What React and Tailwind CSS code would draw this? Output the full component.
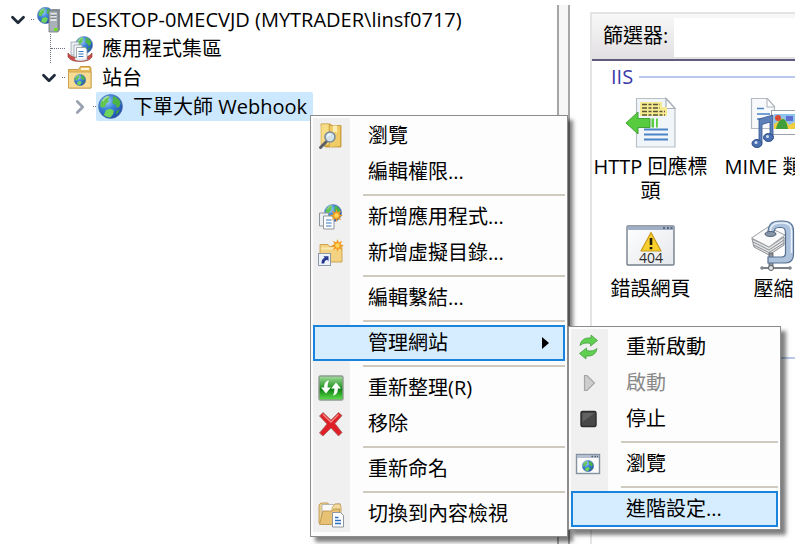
import { useState } from 'react';
import { ChevronDown, ChevronRight } from 'lucide-react';

/* ---------- ICONS ---------- */

// Shared globe, drawn in a 24x24 box so other icons can nest it
function Globe({ size = 26, ...rest }) {
  return (
    <svg width={size} height={size} viewBox="0 0 24 24" {...rest}>
      <defs>
        <radialGradient id="globeSea" cx="35%" cy="28%" r="80%">
          <stop offset="0" stopColor="#a8d2fa" />
          <stop offset="0.4" stopColor="#3f86dc" />
          <stop offset="1" stopColor="#1c47a4" />
        </radialGradient>
      </defs>
      <circle cx="12" cy="12" r="11.5" fill="url(#globeSea)" stroke="#4c6ea8" strokeWidth="0.6" />
      <path d="M2.2 9.5C3.4 5.4 6.3 2.6 10 1.8l1.2 1.6-1.6 2.2.8 2-2.6 1.6-.6 2.6-2.4 1.4-2.4-.8z" fill="#62c650" />
      <path d="M14.5 2c3.4 1 6 3.4 7.2 6.4l-1.2 3.8-2.4 1-1.2-2.8-3.2-1.6.6-3.4z" fill="#4db545" />
      <path d="M7.6 15.4l4.2-1.2 3.4 1.6-.6 3.4-2.6 3.4c-2.6 0-4.8-1-6.4-2.4z" fill="#6fd45c" />
      <path d="M17.8 16.2l3-1.4c-.6 2-1.8 3.8-3.4 5z" fill="#3aa341" />
      <path d="M4.6 6.8C6 4.4 8 3 10.4 2.6" stroke="#d6f0c8" strokeWidth="1.2" fill="none" opacity="0.7" />
    </svg>
  );
}

function ServerIcon() {
  return (
    <svg width="26" height="28" viewBox="0 0 26 28">
      <Globe size={17} x="1" y="1" />
      <path d="M13 5l3-2h8v21l-2 2h-9z" fill="#8b949c" />
      <path d="M13 5h9v21h-9z" fill="#aab2b8" stroke="#6d757c" strokeWidth="0.8" />
      <path d="M14.5 8h6M14.5 11h6M14.5 14h6" stroke="#f4f6f7" strokeWidth="1.4" />
      <path d="M14.5 9.2h6M14.5 12.2h6" stroke="#5d646a" strokeWidth="0.8" />
      <rect x="18" y="22" width="3.4" height="3" fill="#6be01e" />
    </svg>
  );
}

function AppPoolIcon() {
  return (
    <svg width="26" height="26" viewBox="0 0 26 26">
      <Globe size={18} x="8" y="0" />
      <path d="M1 17v4c2 3 6 4.5 12 4.5s10-1.5 12-4.5v-4c-2 3-6 4.5-12 4.5S3 20 1 17z" fill="#c8504a" stroke="#8f2f2c" strokeWidth="0.6" />
      <path d="M4 6h8v13H4z" fill="#eceff2" stroke="#9ba3ab" strokeWidth="0.8" />
      <path d="M7 9h8v12H7z" fill="#f5f7f9" stroke="#9ba3ab" strokeWidth="0.8" />
      <path d="M9.5 11.5h8.5l2 2V24h-10.5z" fill="#fff" stroke="#8b949c" strokeWidth="0.8" />
      <path d="M11.5 15.5h5M11.5 18h5M11.5 20.5h5" stroke="#3b78c4" strokeWidth="1.1" />
      <path d="M8 22.5c3 1.5 8 1.5 11 0" stroke="#e9ecef" strokeWidth="2" fill="none" />
    </svg>
  );
}

function SitesIcon() {
  return (
    <svg width="26" height="26" viewBox="0 0 26 26">
      <path d="M1.5 4.5h10l2-3h9.5l1 2v19.5h-22.5z" fill="#e9bf62" stroke="#c08f3a" strokeWidth="0.9" />
      <path d="M14 3h8v2h-8z" fill="#fff8e0" />
      <path d="M1.5 7h22.5v16h-22.5z" fill="#f6dc92" stroke="#cda04c" strokeWidth="0.9" />
      <Globe size={12} x="7" y="9" />
    </svg>
  );
}

function BrowseFolderIcon() {
  return (
    <svg width="28" height="28" viewBox="0 0 28 28">
      <path d="M4 2h9l2 1.5h9V25H8z" fill="#d9ab3f" stroke="#c2953a" strokeWidth="0.8" />
      <path d="M4 2h8v21H4z" fill="#f6dd86" stroke="#d0a549" strokeWidth="0.6" />
      <path d="M13 4h10v20l-10 1z" fill="#f0cc66" />
      <path d="M16 3.5h4V11l-2-1.5L16 11z" fill="#fbeeb4" />
      <path d="M9.5 19.5L3.5 25.5" stroke="#5b5f66" strokeWidth="3" strokeLinecap="round" />
      <circle cx="13" cy="15" r="5" fill="#cfe6f8" fillOpacity="0.9" stroke="#7b8c9c" strokeWidth="1.6" />
      <path d="M10.5 14.5c.3-1.5 1.5-2.3 3-2.2" stroke="#fff" strokeWidth="1.2" fill="none" />
    </svg>
  );
}

function Spark({ x, y }) {
  return (
    <svg x={x} y={y} width="13" height="13" viewBox="0 0 13 13">
      <path d="M6.5 0l1.3 3.6L11.3 1.7 9.4 5.2 13 6.5 9.4 7.8l1.9 3.5-3.5-1.9L6.5 13 5.2 9.4 1.7 11.3l1.9-3.5L0 6.5l3.6-1.3L1.7 1.7l3.5 1.9z" fill="#f29a1f" />
      <circle cx="6.5" cy="6.5" r="2.2" fill="#ffd75a" />
    </svg>
  );
}

function AddAppIcon() {
  return (
    <svg width="28" height="28" viewBox="0 0 28 28">
      <Globe size={18} x="7" y="1" />
      <path d="M2.5 10h9v13h-9z" fill="#eef1f4" stroke="#8f979f" strokeWidth="1" />
      <path d="M6.5 13h8l2.5 2.5V26H6.5z" fill="#fff" stroke="#8f979f" strokeWidth="1" />
      <path d="M9 17h5.5M9 20h5.5M9 23h5.5" stroke="#3b78c4" strokeWidth="1.1" />
      <Spark x="13" y="6" />
    </svg>
  );
}

function AddVirtualDirIcon() {
  return (
    <svg width="28" height="28" viewBox="0 0 28 28">
      <path d="M3 5.5h8l1.5 2H25V23H3z" fill="#f3d382" stroke="#c99d48" strokeWidth="0.9" />
      <path d="M4 8.5h20v2H4z" fill="#fbe9b4" />
      <Spark x="14" y="0" />
      <rect x="1.5" y="14.5" width="12" height="12" fill="#eef3fa" stroke="#8d99aa" />
      <path d="M4.5 24.5c0-3.5 1-5 3.2-5.5l-1.2-1.7h5v5l-1.4-1.5c-1.8.4-2.6 1.5-2.8 3.7z" fill="#25388f" />
    </svg>
  );
}

function RefreshIcon() {
  return (
    <svg width="28" height="28" viewBox="0 0 28 28">
      <defs>
        <linearGradient id="refreshBg" x1="0" y1="0" x2="0" y2="1">
          <stop offset="0" stopColor="#a5dd9f" />
          <stop offset="0.45" stopColor="#2d9a2b" />
          <stop offset="0.55" stopColor="#0f7f13" />
          <stop offset="1" stopColor="#5fe04c" />
        </linearGradient>
      </defs>
      <rect x="2" y="2" width="24" height="24" rx="1.5" fill="url(#refreshBg)" stroke="#8f9a8f" strokeWidth="1.4" />
      <path d="M12 6.5C8.5 7 7 9.5 7.2 13.5H4l5 6 4.8-6h-3.2c0-2.5.2-4.5 1.4-7z" fill="#fff" />
      <path d="M16 21.5c3.5-.5 5-3 4.8-7H24l-5-6-4.8 6h3.2c0 2.5-.2 4.5-1.4 7z" fill="#fff" />
    </svg>
  );
}

function RemoveIcon() {
  return (
    <svg width="28" height="28" viewBox="0 0 28 28">
      <path d="M6 2.5l8 7.5 7.5-7.5 3.5 3-7 8 7 9-3.5 3.5-7.5-8-8 8L2.5 23l7.5-9-7.5-8z" fill="#df2027" stroke="#a9696a" strokeWidth="0.9" strokeLinejoin="round" />
      <path d="M6 4.5l8 7.5 7.5-7.5" stroke="#f58a86" strokeWidth="1.3" fill="none" />
    </svg>
  );
}

function ContentViewIcon() {
  return (
    <svg width="28" height="28" viewBox="0 0 28 28">
      <path d="M2 5l2-2h7l1 2v18H2z" fill="#edd190" stroke="#b98f45" strokeWidth="0.8" />
      <path d="M5 4.5h12l6-1v17H5z" fill="#fafafa" stroke="#a9a9a9" strokeWidth="0.8" />
      <path d="M15 8l3-4h5l1 3v13l-9 3z" fill="#f3dca0" stroke="#c29a51" strokeWidth="0.8" />
      <path d="M2.5 24.5L6 11h9l2-2h6l-3 15.5z" fill="#e8c274" stroke="#b98f45" strokeWidth="0.8" />
      <path d="M15.5 12.5h8l3 3V27h-11z" fill="#fff" stroke="#8f979f" strokeWidth="1" />
      <path d="M18 17.5h3.5M18 20.5h6M18 23.5h6" stroke="#2f6fc0" strokeWidth="1.3" />
    </svg>
  );
}

function RestartIcon() {
  return (
    <svg width="28" height="28" viewBox="0 0 28 28">
      <path d="M5 12.5C6 6.5 10 4.5 16 5V2l6.5 5.5-7 5.5v-2.5c-4.5-1-7.5-.5-10.5 2z" fill="#5fd04f" stroke="#4a9c44" strokeWidth="0.8" />
      <path d="M22 15.5c-1 6-5 8-11 7.5v3l-6.5-5.500 7-5.500v2.5c4.5 1 7.5.5 10.5-2z" fill="#5fd04f" stroke="#4a9c44" strokeWidth="0.8" />
    </svg>
  );
}

function StartIcon() {
  return (
    <svg width="28" height="28" viewBox="0 0 28 28">
      <path d="M9.5 6.5H12l7.5 7.5-7.5 7.5H9.5z" fill="#cdcdcd" stroke="#a6a6a6" strokeWidth="1.2" />
    </svg>
  );
}

function StopIcon() {
  return (
    <svg width="28" height="28" viewBox="0 0 28 28">
      <rect x="6" y="6.5" width="15" height="15" rx="1.5" fill="#484848" stroke="#2c2c2c" strokeWidth="1.4" />
      <path d="M7.5 8h12l-12 9z" fill="#626262" />
    </svg>
  );
}

function BrowseSiteIcon() {
  return (
    <svg width="28" height="28" viewBox="0 0 28 28">
      <rect x="1.5" y="4.5" width="23" height="19" fill="#fafafa" stroke="#8391a2" strokeWidth="1.4" />
      <path d="M2 5h22v3H2z" fill="#b4c0cf" />
      <path d="M16.5 6.5H18M19.5 6.5H21M22 6.5h1" stroke="#4f5d70" strokeWidth="1.4" />
      <Globe size={12} x="7" y="10" />
    </svg>
  );
}

function HttpHeadersIcon() {
  return (
    <svg width="52" height="52" viewBox="0 0 52 52">
      <path d="M11.5 1.5h30l8.5 10V50H11.500z" fill="#f0f5fa" stroke="#b9bfc6" strokeWidth="1.2" />
      <path d="M41 1.5v10h9z" fill="#fff" stroke="#a9afb6" strokeWidth="1.2" />
      <path d="M15 5h22v5h5v9H15z" fill="#f7eb92" />
      <path d="M17 7.5h18M17 11h18M17 14.5h23M17 18h23" stroke="#5a5436" strokeWidth="1.5" strokeDasharray="5 1.5 3 1.5" />
      <path d="M1 26l12-11v6.5h12v9H13V37z" fill="#57cc3f" stroke="#3a9a2c" strokeWidth="0.9" />
      <path d="M26.5 21.5H29v9h-2.500zM31 21.5h1.800v9H31z" fill="#57cc3f" />
      <path d="M19 32.5h24M19 37.5h24M19 42.5h24" stroke="#4b83c6" strokeWidth="1.8" />
    </svg>
  );
}

function MimeTypesIcon() {
  return (
    <svg width="52" height="52" viewBox="0 0 52 52">
      <path d="M3.5 1.5h16l7 8v22h-23z" fill="#f7f9fb" stroke="#b4bac1" strokeWidth="1.2" />
      <path d="M19 1.5V10h7.5z" fill="#fff" stroke="#a9afb6" />
      <path d="M9 11.5h7M9 17h13M9 22h8" stroke="#4b83c6" strokeWidth="1.5" />
      <rect x="23.5" y="13.5" width="27" height="24" fill="#fff" stroke="#9aa2ab" />
      <rect x="26" y="17" width="21" height="15" fill="#8ec3f0" />
      <path d="M26 32v-5l9-6 6 7 6-3v7z" fill="#f1ce3d" />
      <path d="M28 32c1-6 4-10 7-10s4 5 5 10z" fill="#3f9e3a" />
      <circle cx="30" cy="21" r="3" fill="#dd4a32" />
      <path d="M38 19h7v5h-7z" fill="#5f6fd0" />
      <path d="M11 22l14-4v22h-3V25l-8 2.5V46h-3z" fill="#5d80ba" stroke="#34558f" strokeWidth="0.8" />
      <ellipse cx="9" cy="46.5" rx="5" ry="4" fill="#4a6fae" stroke="#2f4c83" />
      <ellipse cx="20.5" cy="40.5" rx="5" ry="4" fill="#4a6fae" stroke="#2f4c83" />
      <circle cx="8" cy="45.5" r="1.5" fill="#d3e0f5" />
      <circle cx="19.5" cy="39.5" r="1.5" fill="#d3e0f5" />
    </svg>
  );
}

function ErrorPagesIcon() {
  return (
    <svg width="52" height="52" viewBox="0 0 52 52">
      <defs>
        <linearGradient id="errBg" x1="0" y1="0" x2="1" y2="1">
          <stop offset="0" stopColor="#ffffff" />
          <stop offset="1" stopColor="#e4e7eb" />
        </linearGradient>
      </defs>
      <rect x="2" y="7" width="47" height="39" rx="1" fill="url(#errBg)" stroke="#75808d" strokeWidth="1.4" />
      <path d="M2.5 7.5h46V11h-46z" fill="#9fb0c6" />
      <path d="M38 9h2M42 9h2M45.5 9h2" stroke="#46566c" strokeWidth="1.5" />
      <path d="M26 13.5L36 32H16z" fill="#f8cf2c" stroke="#c79a1d" strokeWidth="1.2" strokeLinejoin="round" />
      <path d="M26 19v7M26 28v2.200" stroke="#1d1a0c" strokeWidth="2.6" />
      <text x="26" y="44" textAnchor="middle" fontFamily="Open Sans, sans-serif" fontSize="14" fill="#2c2c2c">404</text>
    </svg>
  );
}

function CompressionIcon() {
  return (
    <svg width="52" height="52" viewBox="0 0 52 52">
      <path d="M4 20l17 8 15-10v8L21 36 6 28z" fill="#e4e5e6" stroke="#8c8f93" />
      <path d="M5 23l16 8 15-10M5.5 26L21 33.500 36 24" stroke="#8c8f93" fill="none" />
      <path d="M3.5 19L20 8l17 8-16 12z" fill="#fafafa" stroke="#9b9ea2" />
      <path d="M21 34h4v15h-4z" fill="#8f969e" stroke="#53595f" strokeWidth="0.8" />
      <path
        d="M20 14C20 5 24 2 32 2h3c7 0 10.500 4 10.500 10v23c0 6-3 9-8 9H20v-6h14c2.500 0 3.500-1 3.500-4V14c0-4-1-5.500-4-5.500h-3c-3 0-4.500 1.500-4.500 5.500z"
        fill="#adc2dc"
        stroke="#56708f"
        strokeWidth="1.2"
      />
      <path d="M22.500 12c0-5.500 3.500-8 9.500-8h3c5.500 0 8.500 3 8.500 8v22" stroke="#e9f1fa" strokeWidth="1.5" fill="none" />
      <ellipse cx="22.5" cy="15" rx="5.5" ry="2.5" fill="#8795a8" stroke="#4b5a6e" />
      <path d="M14 49h28" stroke="#53595f" strokeWidth="1.5" />
      <circle cx="14" cy="49" r="1.8" fill="#80868d" />
      <circle cx="42" cy="49" r="1.8" fill="#80868d" />
      <circle cx="23" cy="49" r="2.5" fill="#e3e6e9" stroke="#53595f" />
    </svg>
  );
}

/* ---------- TREE ---------- */

function Dots() {
  return <span className="w-[3px] shrink-0 border-t border-dotted border-gray-500" />;
}

function TreeRow({ indent, toggle, icon, label, selected, onSelect }) {
  return (
    <li role="treeitem" aria-selected={!!selected} className={`flex items-center h-[29px] ${indent}`}>
      {toggle}
      <button
        onClick={onSelect}
        className={`flex items-center h-full pr-[6px] whitespace-nowrap rounded-xs ${selected ? 'bg-[#cce8ff]' : ''}`}
      >
        <span className="flex justify-center w-[29px] shrink-0">{icon}</span>
        <span className="pl-2">{label}</span>
      </button>
    </li>
  );
}

function Toggle({ open }) {
  return (
    <>
      <button className="w-[15px] mr-[6px] flex justify-center shrink-0" aria-expanded={open}>
        {open ? (
          <ChevronDown size={22} strokeWidth={3} className="shrink-0 text-gray-800" />
        ) : (
          <ChevronRight size={22} strokeWidth={3} className="shrink-0 text-gray-400" />
        )}
      </button>
      <Dots />
    </>
  );
}

function ConnectionsTree() {
  const [selected, setSelected] = useState('site');

  return (
    <ul role="tree" className="pt-[5px]">
      <TreeRow
        indent="pl-[10px]"
        toggle={<Toggle open />}
        icon={<ServerIcon />}
        label="DESKTOP-0MECVJD (MYTRADER\linsf0717)"
        selected={selected === 'server'}
        onSelect={() => setSelected('server')}
      />
      <TreeRow
        indent="pl-[50px]"
        toggle={
          <span className="flex items-center self-stretch w-[15px] border-l border-dotted border-gray-500">
            <span className="w-full border-t border-dotted border-gray-500" />
          </span>
        }
        icon={<AppPoolIcon />}
        label="應用程式集區"
        selected={selected === 'pools'}
        onSelect={() => setSelected('pools')}
      />
      <TreeRow
        indent="pl-[41px]"
        toggle={<Toggle open />}
        icon={<SitesIcon />}
        label="站台"
        selected={selected === 'sites'}
        onSelect={() => setSelected('sites')}
      />
      <TreeRow
        indent="pl-[72px]"
        toggle={<Toggle open={false} />}
        icon={<Globe size={25} />}
        label="下單大師 Webhook"
        selected={selected === 'site'}
        onSelect={() => setSelected('site')}
      />
    </ul>
  );
}

/* ---------- MENUS ---------- */

function Menu({ items, className }) {
  return (
    <ul
      role="menu"
      className={`absolute z-10 border border-[#8c8c8c] px-[2px] pt-[2px] bg-[#fdfdfd] bg-[linear-gradient(#f0f0f0,#f0f0f0)] bg-[length:37px_100%] bg-origin-content bg-no-repeat shadow-[5px_5px_4px_rgba(0,0,0,0.5)] ${className}`}
    >
      {items.map((item, i) =>
        item === '-' ? (
          <li key={i} role="separator" className="flex items-center h-[9px] pl-[50px]">
            <span className="w-full h-[2px] bg-[#cfcbc0]" />
          </li>
        ) : (
          <li key={i} role="none" className="relative">
            <button
              role="menuitem"
              disabled={item.disabled}
              className={`flex items-center w-full h-9 text-left whitespace-nowrap border-2 ${
                item.active ? 'bg-[#d5edff] border-[#1a84dc]' : 'border-transparent enabled:hover:bg-[#d5edff]'
              } ${item.disabled ? 'text-[#8a8a8a]' : ''}`}
            >
              <span className="flex justify-center w-[31px] shrink-0">{item.icon}</span>
              <span className="flex-1 pl-[22px]">{item.label}</span>
              {item.children && (
                <svg width="8" height="14" viewBox="0 0 8 14" className="mr-[14px]">
                  <path d="M1 1l7 6-7 6z" fill="#000" />
                </svg>
              )}
            </button>
            {item.children && <Menu items={item.children} className="left-full top-px ml-[3px] w-[213px] pb-[2px]" />}
          </li>
        )
      )}
    </ul>
  );
}

const manageItems = [
  { label: '重新啟動', icon: <RestartIcon /> },
  { label: '啟動', icon: <StartIcon />, disabled: true },
  { label: '停止', icon: <StopIcon /> },
  '-',
  { label: '瀏覽', icon: <BrowseSiteIcon /> },
  '-',
  { label: '進階設定...', active: true },
];

const siteItems = [
  { label: '瀏覽', icon: <BrowseFolderIcon /> },
  { label: '編輯權限...' },
  '-',
  { label: '新增應用程式...', icon: <AddAppIcon /> },
  { label: '新增虛擬目錄...', icon: <AddVirtualDirIcon /> },
  '-',
  { label: '編輯繫結...' },
  '-',
  { label: '管理網站', active: true, children: manageItems },
  '-',
  { label: '重新整理(R)', icon: <RefreshIcon /> },
  { label: '移除', icon: <RemoveIcon /> },
  '-',
  { label: '重新命名' },
  '-',
  { label: '切換到內容檢視', icon: <ContentViewIcon /> },
];

/* ---------- FEATURES ---------- */

const features = [
  { label: 'HTTP 回應標頭', icon: <HttpHeadersIcon /> },
  { label: 'MIME 類型', icon: <MimeTypesIcon /> },
  { label: '錯誤網頁', icon: <ErrorPagesIcon /> },
  { label: '壓縮', icon: <CompressionIcon /> },
];

function FeaturesView() {
  return (
    <section className="flex-1 min-w-0 mt-3 ml-5 border-l-2 border-t-2 border-[#e4e4e4] overflow-hidden">
      <div className="flex items-stretch h-[47px] pt-1 pb-[2px] bg-linear-to-b from-[#f8f8f8] to-[#e2e0e2] border-b-2 border-[#5f5c80]">
        <label htmlFor="filter" className="flex items-center pl-[11px] pr-[6px] pb-1 whitespace-nowrap">篩選器:</label>
        <input id="filter" className="flex-1 min-w-0 px-2 bg-white outline-none" />
      </div>
      <div className="flex items-center gap-[6px] h-8 pl-[19px]">
        <h2 className="text-[#3a3aa8]">IIS</h2>
        <span className="flex-1 h-[2px] bg-[#b9c9ec]" />
      </div>
      <div className="grid grid-cols-[repeat(2,117px)] gap-x-[6px] pt-1">
        {features.map((f) => (
          <button key={f.label} className="flex flex-col items-center h-[122px]">
            {f.icon}
            <span className="pt-[6px] leading-6">{f.label}</span>
          </button>
        ))}
      </div>
      <div className="mt-4 h-[2px] bg-[#b9c9ec]" />
    </section>
  );
}

function App() {
  return (
    <div className="relative flex min-h-screen overflow-hidden bg-white text-black text-[20px] leading-6 font-['Open_Sans','Noto_Sans_CJK_TC',sans-serif]">
      <nav className="w-[557px] shrink-0">
        <ConnectionsTree />
      </nav>
      {/* Splitter between tree and features */}
      <div className="w-[13px] shrink-0 mt-[5px] bg-[#f6f6f6] border-x-2 border-[#a6a6a6]" />
      <FeaturesView />
      <Menu items={siteItems} className="left-[310px] top-[115px] w-[258px] pb-1" />
    </div>
  );
}

export default App;
